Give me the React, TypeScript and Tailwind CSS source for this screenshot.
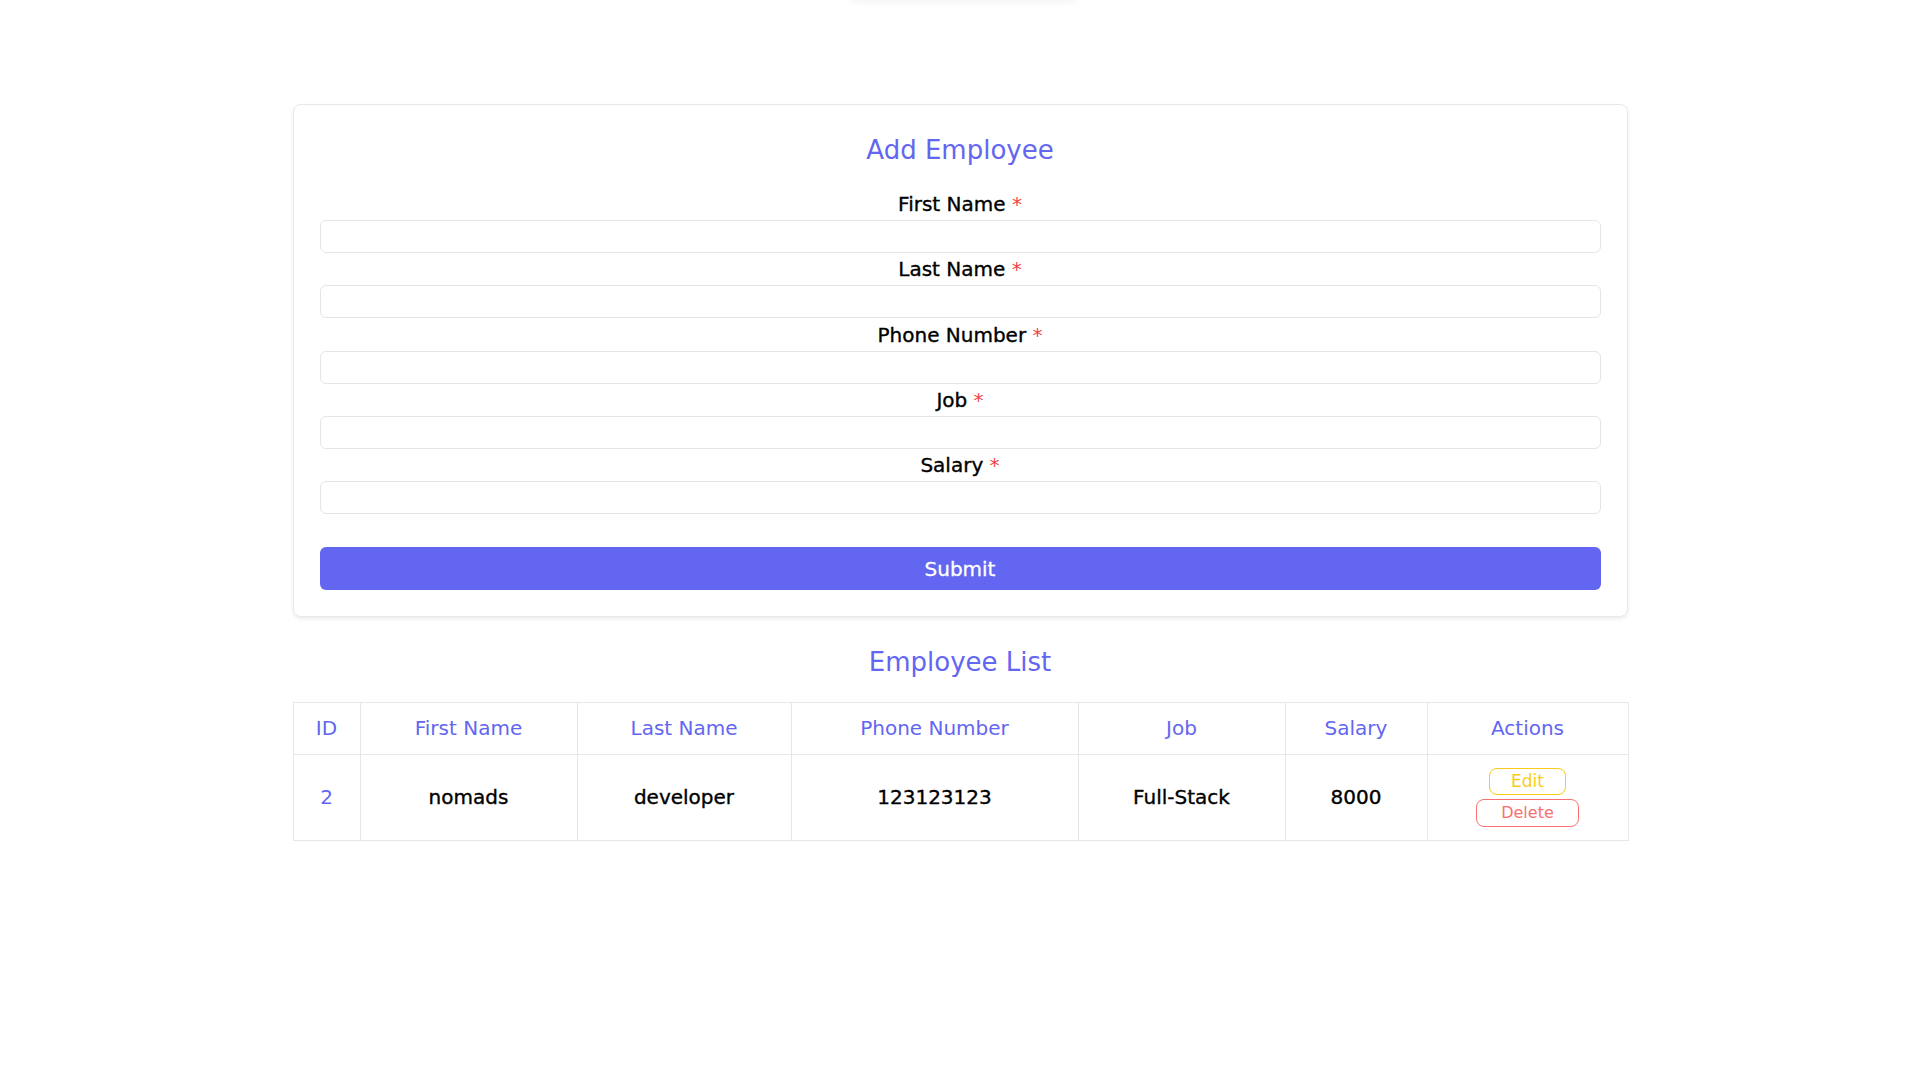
import { useState } from "react";

interface Employee {
    id: number;
    firstName: string;
    lastName: string;
    phone: string;
    job: string;
    salary: string;
}

const fields = [
    { key: "firstName", label: "First Name" },
    { key: "lastName", label: "Last Name" },
    { key: "phone", label: "Phone Number" },
    { key: "job", label: "Job" },
    { key: "salary", label: "Salary" },
];

export default function App() {
    const [employees] = useState<Employee[]>([
        { id: 2, firstName: "nomads", lastName: "developer", phone: "123123123", job: "Full-Stack", salary: "8000" },
    ]);

    return (
        <div className="relative min-h-screen bg-white text-black font-['DejaVu_Sans','Noto_Sans',sans-serif]">
            {/* toast sitting just above the viewport */}
            <div className="absolute top-[-40px] left-[850px] w-[227px] h-[40px] rounded-md bg-white shadow-[0_0_10px_rgba(0,0,0,0.08)]" />

            <div className="w-[1335px] mx-auto pt-[104px]">
                <div className="border border-[#e8e8e8] rounded-lg shadow-[0_2px_4px_rgba(0,0,0,0.08)] px-[26px] pt-[25px] pb-[26px]">
                    <h2 className="text-center text-[#6366f1] text-[26px] leading-[39px] mt-[1px] mb-[21px]">Add Employee</h2>

                    <form onSubmit={(e) => e.preventDefault()}>
                        {fields.map((f, i) => (
                            <div key={f.key} className={i > 0 ? "mt-[3.25px]" : ""}>
                                <label className="block text-center text-[20px] leading-[27px] [-webkit-text-stroke:0.35px_black]">
                                    {f.label} <span className="text-[#ef4444] [-webkit-text-stroke:0]">*</span>
                                </label>
                                <input
                                    type="text"
                                    className="block w-full mt-[2px] h-[33px] px-3 border border-[#e5e5e5] rounded-md focus:outline-none"
                                />
                            </div>
                        ))}

                        <button
                            type="submit"
                            className="block w-full mt-[33px] h-[43px] rounded-md bg-[#6366f1] text-white text-[20px] [-webkit-text-stroke:0.3px_white]"
                        >
                            Submit
                        </button>
                    </form>
                </div>

                <h2 className="text-center text-[#6366f1] text-[26px] leading-[39px] mt-[26px] mb-[20px]">Employee List</h2>

                <table className="w-full table-fixed border-collapse border border-[#e5e7eb] text-[20px] leading-[27px]">
                    <thead>
                        <tr className="text-[#6366f1]">
                            <th className="w-[67px] border border-[#e5e7eb] py-3 font-normal">ID</th>
                            <th className="w-[217px] border border-[#e5e7eb] py-3 font-normal">First Name</th>
                            <th className="w-[214px] border border-[#e5e7eb] py-3 font-normal">Last Name</th>
                            <th className="w-[287px] border border-[#e5e7eb] py-3 font-normal">Phone Number</th>
                            <th className="w-[207px] border border-[#e5e7eb] py-3 font-normal">Job</th>
                            <th className="w-[142px] border border-[#e5e7eb] py-3 font-normal">Salary</th>
                            <th className="w-[201px] border border-[#e5e7eb] py-3 font-normal">Actions</th>
                        </tr>
                    </thead>
                    <tbody>
                        {employees.map((emp) => (
                            <tr key={emp.id} className="text-center">
                                <td className="border border-[#e5e7eb] text-[#6366f1]">{emp.id}</td>
                                <td className="border border-[#e5e7eb] [-webkit-text-stroke:0.35px_black]">{emp.firstName}</td>
                                <td className="border border-[#e5e7eb] [-webkit-text-stroke:0.35px_black]">{emp.lastName}</td>
                                <td className="border border-[#e5e7eb] [-webkit-text-stroke:0.35px_black]">{emp.phone}</td>
                                <td className="border border-[#e5e7eb] [-webkit-text-stroke:0.35px_black]">{emp.job}</td>
                                <td className="border border-[#e5e7eb] [-webkit-text-stroke:0.35px_black]">{emp.salary}</td>
                                <td className="border border-[#e5e7eb] py-[13px]">
                                    <div className="flex flex-col items-center gap-[4px]">
                                        <button className="h-[27px] px-[21px] border border-[#facc15] text-[#facc15] rounded-lg text-[17px] leading-[25px]">
                                            Edit
                                        </button>
                                        <button className="h-[28px] px-[24px] border border-[#f87171] text-[#f87171] rounded-lg text-[16px] leading-[26px]">
                                            Delete
                                        </button>
                                    </div>
                                </td>
                            </tr>
                        ))}
                    </tbody>
                </table>
            </div>
        </div>
    );
}
